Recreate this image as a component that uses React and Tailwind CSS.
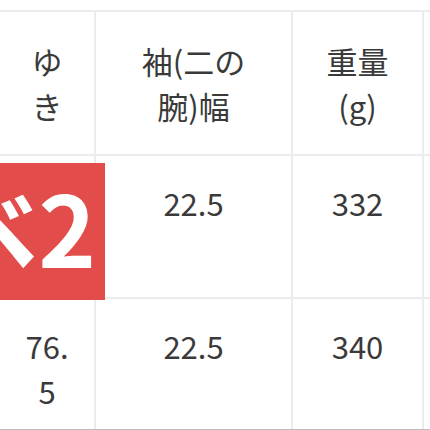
import React from 'react';

const font = { fontFamily: '"Noto Sans CJK JP", "Noto Sans", sans-serif' };

// 1列目は左端が画面外に切れている
const cols = ['w-[96px]', 'w-[197px]', 'w-[131px]'];

function Row({ cells, className, pad }) {
  return (
    <div className={`flex border-b-2 border-[#ececec] ${className}`}>
      {cells.map((c, i) => (
        <div
          key={i}
          className={`${cols[i]} ${pad} shrink-0 border-r-2 border-[#ececec] text-center text-[31px] leading-[45px] text-[#3a3a3a]`}
        >
          {c}
        </div>
      ))}
    </div>
  );
}

export default function App() {
  return (
    <div className="relative w-[430px] h-[430px] overflow-hidden bg-white" style={font}>
      <div className="h-[10px]" />
      <div className="border-t-2 border-[#ececec]">
        <Row
          className="h-[144px]"
          pad="pt-[26px]"
          cells={[
            <>ゆ<br />き</>,
            <>袖(二の<br />腕)幅</>,
            <>重量<br />(g)</>,
          ]}
        />
        <Row className="h-[143px]" pad="pt-6" cells={['', '22.5', '332']} />
        <Row
          className="h-[131px] !border-b !border-[#bdbdbd]"
          pad="pt-6"
          cells={[<>76.<br />5</>, '22.5', '340']}
        />
      </div>

      {/* ランキングバッジ */}
      <div className="absolute left-0 top-[163px] w-[105px] h-[137px] overflow-hidden bg-[#e24c4b]">
        <div className="absolute right-[9px] top-[-8px] whitespace-nowrap text-[98px] leading-[140px] font-bold text-white">
          ベ2
        </div>
      </div>
    </div>
  );
}
